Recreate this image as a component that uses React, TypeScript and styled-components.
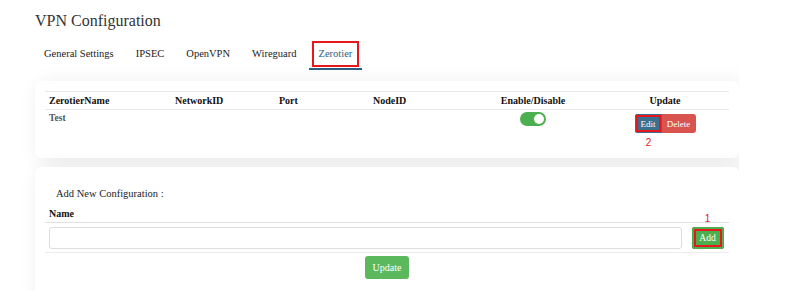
import styled, { createGlobalStyle } from 'styled-components';

const GlobalStyle = createGlobalStyle`
  html, body {
    margin: 0;
    padding: 0;
    background: #fff;
    font-family: 'Liberation Serif', 'Times New Roman', serif;
    color: #333;
  }
`;

const tabs = ['General Settings', 'IPSEC', 'OpenVPN', 'Wireguard', 'Zerotier'];

function App(): JSX.Element {
  return (
    <>
      <GlobalStyle />
      <Page>
        <Title>VPN Configuration</Title>
        <TabBar>
          {tabs.map((t) => (
            <Tab key={t} $active={t === 'Zerotier'}>
              <TabLabel $marked={t === 'Zerotier'}>{t}</TabLabel>
            </Tab>
          ))}
        </TabBar>

        <Card>
          <ListTable>
            <HeadCell>ZerotierName</HeadCell>
            <HeadCell>NetworkID</HeadCell>
            <HeadCell>Port</HeadCell>
            <HeadCell>NodeID</HeadCell>
            <HeadCell $center>Enable/Disable</HeadCell>
            <HeadCell $center>Update</HeadCell>

            <BodyCell>Test</BodyCell>
            <BodyCell />
            <BodyCell />
            <BodyCell />
            <BodyCell $center>
              <Toggle $on>
                <Knob />
              </Toggle>
            </BodyCell>
            <BodyCell $center>
              <ButtonGroup>
                <EditButton>Edit</EditButton>
                <DeleteButton>Delete</DeleteButton>
              </ButtonGroup>
              <StepMark>2</StepMark>
            </BodyCell>
          </ListTable>
        </Card>

        <Card $grow>
          <SectionTitle>Add New Configuration :</SectionTitle>
          <FormTable>
            <FormHead>Name</FormHead>
            <FormHead $center>
              <StepMark>1</StepMark>
            </FormHead>
            <FormCell>
              <NameInput type='text' />
            </FormCell>
            <FormCell $center>
              <AddButton>Add</AddButton>
            </FormCell>
          </FormTable>
          <Actions>
            <UpdateButton>Update</UpdateButton>
          </Actions>
        </Card>
      </Page>
    </>
  );
}

export default App;

const Page = styled.div`
  width: 704px;
  padding: 10px 0 0 35px;
  height: 281px;
  overflow: hidden;
`;

const Title = styled.h1`
  margin: 0;
  font-size: 16px;
  font-weight: normal;
  line-height: 22px;
  color: #333;
`;

const TabBar = styled.div`
  display: flex;
  margin-top: 7px;
  padding-bottom: 11px;
`;

const Tab = styled.div<{ $active?: boolean }>`
  padding: 0 10px;
  margin-right: 2px;
  height: 29px;
  display: flex;
  align-items: center;
  border-bottom: 2px solid ${(p) => (p.$active ? '#2f5d7f' : 'transparent')};
  font-size: 10.5px;
  color: ${(p) => (p.$active ? '#2f5d7f' : '#1a1a1a')};

  &:first-child {
    margin-left: -1px;
  }
`;

const TabLabel = styled.span<{ $marked?: boolean }>`
  display: inline-block;
  padding: 5px 5px;
  margin: 0 -7px;
  border: 2px solid ${(p) => (p.$marked ? '#e8161d' : 'transparent')};
  line-height: 12px;
`;

const Card = styled.div<{ $grow?: boolean }>`
  background: #fff;
  border-radius: 6px;
  box-shadow: 5px 3px 22px rgba(0, 0, 0, 0.09);
  padding: 10px 10px ${(p) => (p.$grow ? '30px' : '0')};
  margin-bottom: 9px;
  height: ${(p) => (p.$grow ? 'auto' : '67px')};
`;

const ListTable = styled.div`
  display: grid;
  grid-template-columns: 126px 104px 94px 96px 136px 128px;
  border-top: 1px solid #e8e8e8;
`;

const HeadCell = styled.div<{ $center?: boolean }>`
  height: 17px;
  line-height: 17px;
  padding: 0 4px;
  font-size: 10px;
  font-weight: bold;
  color: #111;
  text-align: ${(p) => (p.$center ? 'center' : 'left')};
  border-bottom: 1px solid #e8e8e8;
`;

const BodyCell = styled.div<{ $center?: boolean }>`
  padding: 3px 4px;
  font-size: 9.5px;
  font-weight: bold;
  color: #555;
  display: flex;
  flex-direction: column;
  align-items: ${(p) => (p.$center ? 'center' : 'flex-start')};
`;

const Toggle = styled.div<{ $on?: boolean }>`
  width: 26px;
  height: 14px;
  border-radius: 7px;
  background: ${(p) => (p.$on ? '#4caf50' : '#ccc')};
  display: flex;
  align-items: center;
  justify-content: ${(p) => (p.$on ? 'flex-end' : 'flex-start')};
  padding: 0 2px;
  box-sizing: border-box;
  margin-top: -1px;
`;

const Knob = styled.div`
  width: 10px;
  height: 10px;
  border-radius: 50%;
  background: #fff;
`;

const ButtonGroup = styled.div`
  display: flex;
  margin-top: 1px;
  border-radius: 3px;
  overflow: hidden;
`;

const BaseButton = styled.button`
  font-family: 'Liberation Serif', 'Times New Roman', serif;
  color: #fff;
  border: none;
  cursor: pointer;
  font-size: 9px;
  padding: 0;
`;

const EditButton = styled(BaseButton)`
  width: 27px;
  height: 19px;
  background: #3b6f8f;
  box-shadow: inset 0 0 0 1px #3b6f8f, inset 0 0 0 3px #e8161d;
`;

const DeleteButton = styled(BaseButton)`
  width: 34px;
  height: 19px;
  background: #d9534f;
`;

const StepMark = styled.span`
  font-family: 'Liberation Sans', Arial, sans-serif;
  font-size: 10px;
  font-weight: normal;
  color: #e8161d;
  margin-top: 4px;
  margin-left: -33px;
`;

const SectionTitle = styled.div`
  font-size: 10.5px;
  color: #222;
  padding: 10px 0 0 11px;
  line-height: 14px;
`;

const FormTable = styled.div`
  display: grid;
  grid-template-columns: 1fr 43px;
  margin-top: 4px;
`;

const FormHead = styled.div<{ $center?: boolean }>`
  height: 17px;
  padding: 0 4px;
  font-size: 10px;
  font-weight: bold;
  color: #111;
  line-height: 17px;
  display: flex;
  align-items: flex-end;
  justify-content: ${(p) => (p.$center ? 'center' : 'flex-start')};
  border-bottom: 1px solid #e0e0e0;

  ${StepMark} {
    margin: 0 0 -3px 0;
    line-height: 12px;
  }
`;

const FormCell = styled.div<{ $center?: boolean }>`
  padding: 4px 4px 3px;
  display: flex;
  align-items: center;
  justify-content: ${(p) => (p.$center ? 'center' : 'stretch')};
  border-bottom: 1px solid #ececec;
`;

const NameInput = styled.input`
  width: 100%;
  height: 22px;
  box-sizing: border-box;
  border: 1px solid #ddd;
  border-radius: 3px;
  outline: none;
`;

const AddButton = styled(BaseButton)`
  width: 32px;
  height: 22px;
  font-size: 9.5px;
  border-radius: 3px;
  background: #4cae4c;
  box-shadow: inset 0 0 0 2px #4cae4c, inset 0 0 0 4px #e8161d;
`;

const Actions = styled.div`
  display: flex;
  justify-content: center;
  padding-top: 3px;
`;

const UpdateButton = styled(BaseButton)`
  width: 44px;
  height: 23px;
  font-size: 10px;
  border-radius: 3px;
  background: #5cb85c;
`;
